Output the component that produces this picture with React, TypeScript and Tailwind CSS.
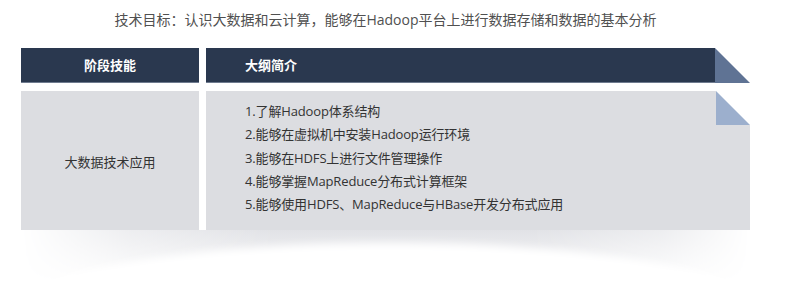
const outline = [
  '1.了解Hadoop体系结构',
  '2.能够在虚拟机中安装Hadoop运行环境',
  '3.能够在HDFS上进行文件管理操作',
  '4.能够掌握MapReduce分布式计算框架',
  '5.能够使用HDFS、MapReduce与HBase开发分布式应用',
];

function Corner({ fill, size }: { fill: string; size: number }) {
  // lower-left triangle coloured, upper-right left white
  return (
    <svg width={size} height={size} viewBox={`0 0 ${size} ${size}`} className="block shrink-0">
      <rect width={size} height={size} fill="#ffffff" />
      <polygon points={`0,0 ${size},${size} 0,${size}`} fill={fill} />
    </svg>
  );
}

export default function App() {
  return (
    <div
      className="h-[290px] w-[789px] overflow-hidden bg-white"
      style={{ fontFamily: '"Open Sans", "Noto Sans CJK SC", sans-serif' }}
    >
      <div className="ml-[21px] w-[729px] pt-[10px]">
        <p className="text-center text-[14px] leading-[20px] text-[#505050]">
          技术目标：认识大数据和云计算，能够在Hadoop平台上进行数据存储和数据的基本分析
        </p>

        {/* header row */}
        <div className="mt-[18px] flex h-[35px] gap-[7px]">
          <div className="flex w-[178px] items-center justify-center bg-[#2a384f] text-[13px] font-bold text-white shadow-[inset_0_-1px_0_#6f7b8f]">
            阶段技能
          </div>
          <div className="flex flex-1">
            <div className="flex flex-1 items-center bg-[#2a384f] pl-[39px] text-[13px] font-bold text-white shadow-[inset_0_-1px_0_#6f7b8f]">
              大纲简介
            </div>
            <Corner fill="#5f7394" size={35} />
          </div>
        </div>

        {/* body row */}
        <div className="mt-[8px] flex h-[139px] gap-[7px]">
          <div className="flex w-[178px] items-center justify-center bg-[#dcdde1] pt-[5px] text-[13px] text-[#333]">
            大数据技术应用
          </div>
          <div className="flex flex-1">
            <ul className="flex-1 bg-[#dcdde1] pl-[39px] pt-[9px] text-[13px] leading-[23.3px] tracking-[-0.15px] text-[#333]">
              {outline.map((line) => (
                <li key={line}>{line}</li>
              ))}
            </ul>
            <div className="flex w-[34px] flex-col">
              <Corner fill="#9cafcd" size={34} />
              <div className="flex-1 bg-[#dcdde1]" />
            </div>
          </div>
        </div>

        {/* curved shadow under the table */}
        <div className="relative h-[60px] overflow-hidden">
          <div className="h-full bg-[linear-gradient(to_bottom,#e1e2e6,#ffffff_90%)] [mask-image:linear-gradient(to_right,transparent,rgba(0,0,0,0.6)_15%,black_35%,black_70%,rgba(0,0,0,0.6)_88%,transparent)]" />
          <div className="absolute left-[-51px] top-[13px] h-[180px] w-[840px] rounded-[50%] bg-white blur-[4px]" />
        </div>
      </div>
    </div>
  );
}
